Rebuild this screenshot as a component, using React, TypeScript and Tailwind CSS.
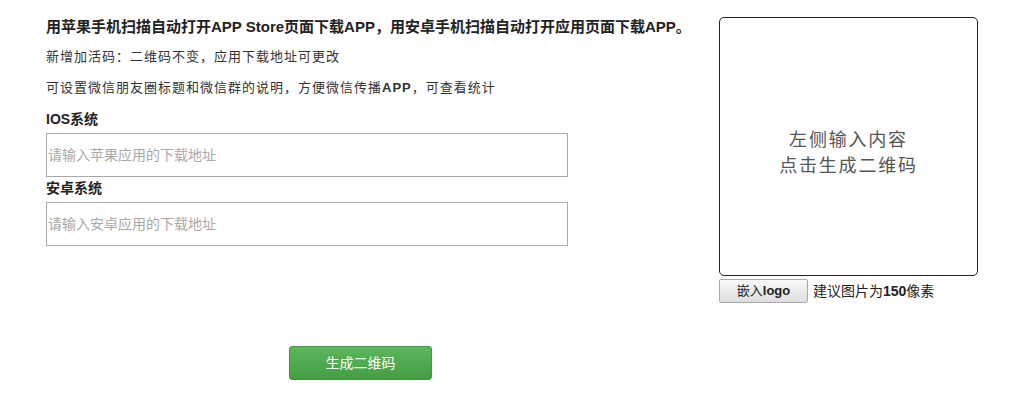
import { FC } from "react";

const font = "font-['Liberation_Sans','Noto_Sans_CJK_SC',sans-serif]";

const UrlInput: FC<{ placeholder: string }> = ({ placeholder }) => (
  <input
    type="text"
    placeholder={placeholder}
    className="mt-[4px] block h-[44px] w-[522px] border border-[#a9a9a9] bg-white px-[1px] text-[14px] text-[#333] outline-none placeholder:text-[#a9a9a9]"
  />
);

const App: FC = () => {
  return (
    <div className={`${font} flex min-h-[411px] bg-white pl-[46px] pt-[17px] text-[#333]`}>
      {/* left column */}
      <div className="w-[673px]">
        <p className="h-[20px] whitespace-nowrap text-[15px] font-bold leading-[20px] text-[#222]">
          用苹果手机扫描自动打开APP Store页面下载APP，用安卓手机扫描自动打开应用页面下载APP。
        </p>
        <p className="mt-[10px] h-[20px] text-[13px] leading-[20px] tracking-[1px]">
          新增加活码：二维码不变，应用下载地址可更改
        </p>
        <p className="mt-[11px] h-[20px] text-[13px] leading-[20px] tracking-[1px]">
          可设置微信朋友圈标题和微信群的说明，方便微信传播<b>APP</b>，可查看统计
        </p>
        <p className="mt-[11px] h-[20px] text-[14px] font-bold leading-[20px] text-[#222]">
          IOS系统
        </p>
        <UrlInput placeholder="请输入苹果应用的下载地址" />
        <p className="mt-[1px] h-[20px] text-[14px] font-bold leading-[20px] text-[#222]">
          安卓系统
        </p>
        <UrlInput placeholder="请输入安卓应用的下载地址" />
        <button className="ml-[243px] mt-[100px] h-[34px] w-[143px] rounded-[3px] border border-[#3e9a3e] bg-gradient-to-b from-[#5cb85c] to-[#449d44] text-[14px] text-white">
          生成二维码
        </button>
      </div>

      {/* right column */}
      <div className="w-[259px]">
        <div className="flex h-[259px] w-[259px] flex-col items-center justify-center rounded-[5px] border border-[#222] pt-[13px] text-[18px] leading-[26px] tracking-[1.8px] text-[#555]">
          <span>左侧输入内容</span>
          <span>点击生成二维码</span>
        </div>
        <div className="mt-[3px] flex items-center">
          <button className="h-[24px] w-[89px] rounded-[2px] border border-[#aaa] bg-gradient-to-b from-[#fafafa] to-[#dedede] text-[13px] text-[#222]">
            嵌入<b>logo</b>
          </button>
          <span className="ml-[5px] text-[14px] text-[#222]">
            建议图片为<b>150</b>像素
          </span>
        </div>
      </div>
    </div>
  );
};

export default App;
